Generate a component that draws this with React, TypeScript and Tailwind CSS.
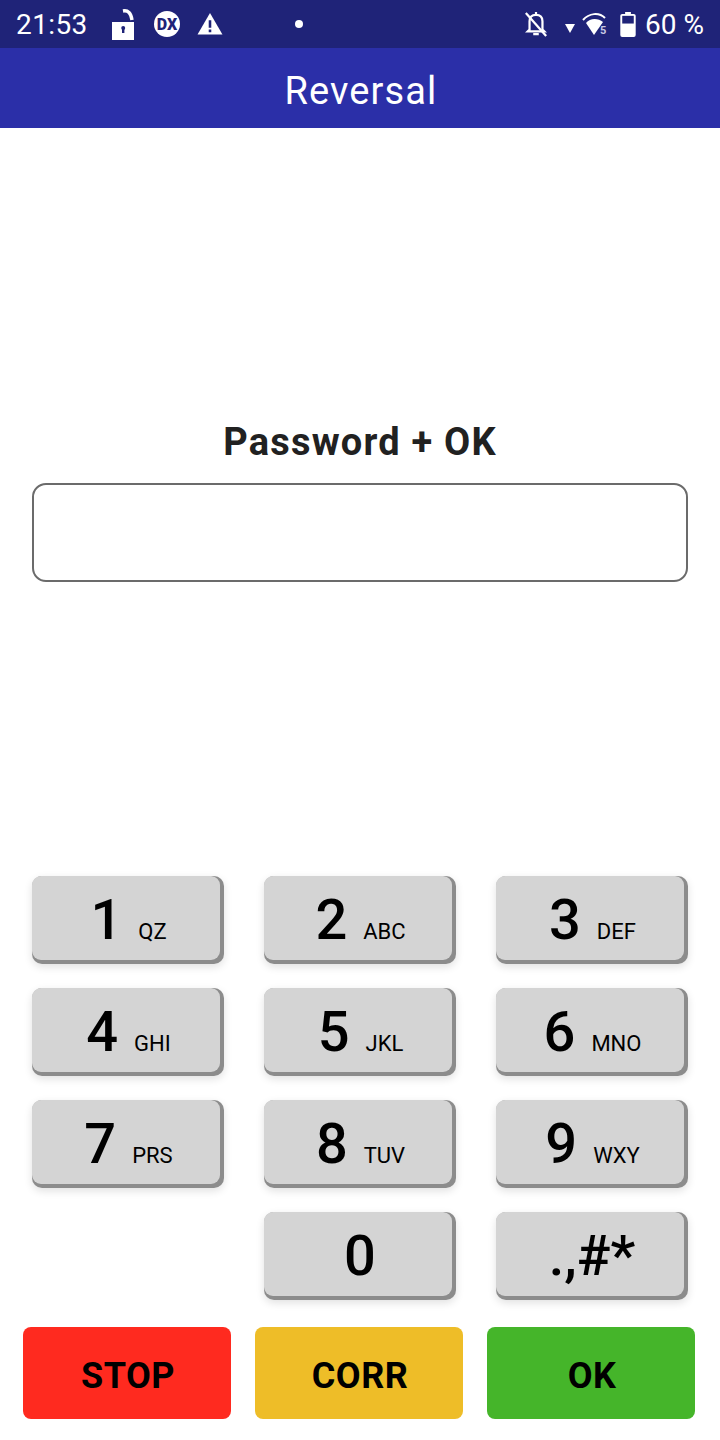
const font = { fontFamily: "Roboto, 'Liberation Sans', sans-serif" };

function Key({ d, s }: { d: string; s?: string }) {
  return (
    <div className="relative h-[88px] w-[192px] rounded-[10px] bg-[#8c8c8c] shadow-[0_3px_8px_rgba(0,0,0,0.12)]">
      <div className={`flex h-[84px] w-[188px] items-center justify-center rounded-[9px] bg-[#d4d4d4] pt-[4px] text-black ${s ? "pl-[5px]" : "pl-[4px]"}`}>
        <span className="text-[56px] font-medium leading-none">{d}</span>
        {s && <span className="ml-[16px] mt-[24px] text-[22px] leading-none">{s}</span>}
      </div>
    </div>
  );
}

function Action({ label, className }: { label: string; className: string }) {
  return (
    <div className={`flex h-[92px] w-[208px] items-center justify-center rounded-[8px] pl-[2px] pt-[5px] text-[36px] font-bold tracking-[0.5px] text-black ${className}`}>
      {label}
    </div>
  );
}

export default function App() {
  return (
    <div style={font} className="flex h-[1440px] w-[720px] flex-col overflow-hidden bg-white">
      <div className="flex h-[48px] items-center bg-[#1f2378] pl-[16px] pr-[16px] text-white">
        <span className="mt-[2px] text-[28px] leading-none tracking-[0.4px]">21:53</span>
        <svg className="ml-[23px]" width="24" height="32" viewBox="0 0 24 32" fill="white">
          <path d="M1 14h22v18H1z" />
          <path d="M12 3c5-1 8 2 9 9" stroke="white" strokeWidth="3.4" fill="none" />
          <path d="M11 20h2.4v5H11z" fill="#1f2378" />
          <circle cx="12.2" cy="20" r="2" fill="#1f2378" />
        </svg>
        <svg className="ml-[18px]" width="28" height="28" viewBox="0 0 28 28">
          <circle cx="14" cy="14" r="13" fill="white" />
          <text x="14" y="19.5" textAnchor="middle" fontSize="16" fontWeight="900" fill="#1f2378">DX</text>
        </svg>
        <svg className="ml-[16px]" width="26" height="24" viewBox="0 0 28 26">
          <path d="M14 1 27.5 24.5H.5z" fill="white" />
          <path d="M12.6 9h2.8v8h-2.8zM12.6 19h2.8v3h-2.8z" fill="#1f2378" />
        </svg>
        <span className="ml-[72px] h-[8px] w-[8px] rounded-full bg-white" />
        <svg className="ml-auto" width="24" height="26" viewBox="0 0 26 28" fill="none" stroke="white" strokeWidth="2.4">
          <path d="M6 20V11c0-5 3-7 7-7s7 2 7 7v9l2 2H4z" />
          <path d="M13 1v3M10 25h6" />
          <path d="M2 2 24 27" />
        </svg>
        <svg className="ml-[17px] mt-[8px]" width="10" height="9" viewBox="0 0 10 9" fill="white">
          <path d="M0 0h10L5 9z" />
        </svg>
        <svg className="ml-[7px]" width="28" height="24" viewBox="0 0 28 24">
          <path d="M1 8C7 1 17 0 23 6" fill="none" stroke="white" strokeWidth="2" />
          <path d="M4 11C8 6 16 6 21 10L12 23z" fill="white" />
          <text x="18" y="22" fontSize="11" fontWeight="700" fill="#c8c9e4">5</text>
        </svg>
        <svg className="ml-[10px]" width="16" height="25" viewBox="0 0 16 26" fill="white">
          <path d="M5 0h6v2h3a2 2 0 0 1 2 2v20a2 2 0 0 1-2 2H2a2 2 0 0 1-2-2V4a2 2 0 0 1 2-2h3z" />
          <path d="M2 4h12v8H2z" fill="#1f2378" />
        </svg>
        <span className="ml-[9px] mt-[2px] text-[28px] leading-none">60 %</span>
      </div>
      <div className="flex h-[80px] items-center justify-center bg-[#2b2fa8] pl-[2px] pt-[6px] text-[38px] tracking-[1.1px] text-white">Reversal</div>
      <div className="flex flex-1 flex-col">
        <div className="mt-[291px] text-center text-[38px] font-bold leading-[46px] tracking-[1.2px] text-[#212121]">Password + OK</div>
        <div className="mx-[32px] mt-[18px] h-[99px] rounded-[14px] border-2 border-[#6b6b6b]" />
        <div className="mx-[32px] mt-[294px] grid grid-cols-3 gap-x-[40px] gap-y-[24px]">
          <Key d="1" s="QZ" />
          <Key d="2" s="ABC" />
          <Key d="3" s="DEF" />
          <Key d="4" s="GHI" />
          <Key d="5" s="JKL" />
          <Key d="6" s="MNO" />
          <Key d="7" s="PRS" />
          <Key d="8" s="TUV" />
          <Key d="9" s="WXY" />
          <div />
          <Key d="0" />
          <Key d=".,#*" />
        </div>
        <div className="ml-[23px] mt-[27px] flex gap-[24px]">
          <Action label="STOP" className="bg-[#ff2a1f]" />
          <Action label="CORR" className="bg-[#eebd28]" />
          <Action label="OK" className="bg-[#45b52a]" />
        </div>
      </div>
    </div>
  );
}
